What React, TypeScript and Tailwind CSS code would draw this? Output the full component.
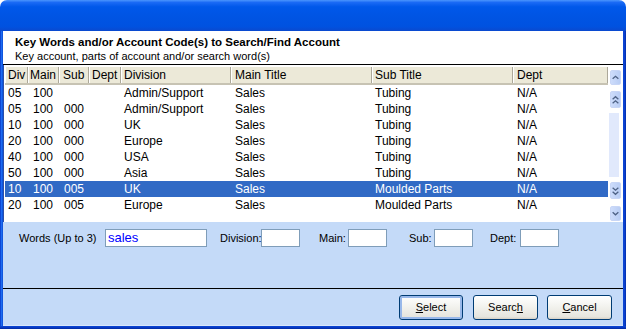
import React from "react";

const cols = [
  { w: 23, label: "Div", hp: 3, dp: 3 },
  { w: 31, label: "Main", hp: 2, dp: 5 },
  { w: 30, label: "Sub", hp: 4, dp: 5 },
  { w: 32, label: "Dept", hp: 3, dp: 3 },
  { w: 110, label: "Division", hp: 3, dp: 3 },
  { w: 141, label: "Main Title", hp: 4, dp: 4 },
  { w: 141, label: "Sub Title", hp: 3, dp: 3 },
  { w: 95, label: "Dept", hp: 4, dp: 4 },
];

const rows = [
  ["05", "100", "", "", "Admin/Support", "Sales", "Tubing", "N/A"],
  ["05", "100", "000", "", "Admin/Support", "Sales", "Tubing", "N/A"],
  ["10", "100", "000", "", "UK", "Sales", "Tubing", "N/A"],
  ["20", "100", "000", "", "Europe", "Sales", "Tubing", "N/A"],
  ["40", "100", "000", "", "USA", "Sales", "Tubing", "N/A"],
  ["50", "100", "000", "", "Asia", "Sales", "Tubing", "N/A"],
  ["10", "100", "005", "", "UK", "Sales", "Moulded Parts", "N/A"],
  ["20", "100", "005", "", "Europe", "Sales", "Moulded Parts", "N/A"],
];

function Chev({ dir, double }: { dir: "up" | "down"; double?: boolean }) {
  const up = dir === "up";
  const p = (y: number) =>
    up ? `M2 ${y + 3} L5.5 ${y} L9 ${y + 3}` : `M2 ${y} L5.5 ${y + 3} L9 ${y}`;
  return (
    <svg width="11" height={double ? 14 : 12} viewBox={`0 0 11 ${double ? 14 : 12}`}>
      {double ? (
        <>
          <path d={p(3)} stroke="#4d6185" strokeWidth="1.6" fill="none" />
          <path d={p(8)} stroke="#4d6185" strokeWidth="1.6" fill="none" />
        </>
      ) : (
        <path d={p(4)} stroke="#4d6185" strokeWidth="1.6" fill="none" />
      )}
    </svg>
  );
}

function SBtn({ h, children }: { h: string; children: React.ReactNode }) {
  return (
    <div
      className={`${h} w-[11px] flex items-center justify-center rounded-[2px] border border-[#c8d6f6] bg-[linear-gradient(90deg,#cddcfb,#b9cdf4)]`}
    >
      {children}
    </div>
  );
}

function XPButton({ children, def }: { children: React.ReactNode; def?: boolean }) {
  return (
    <div
      className={`h-[25px] flex items-center justify-center rounded-[3px] border border-[#003c74] bg-[linear-gradient(180deg,#ffffff_0%,#f4f4f0_40%,#e6e5de_90%,#d6d0c5_100%)] text-[11px] text-black ${
        def ? "shadow-[inset_0_0_0_2px_#98b8ea]" : ""
      }`}
    >
      {children}
    </div>
  );
}

export default function App() {
  return (
    <div
      className="w-[626px] h-[329px] flex flex-col overflow-hidden rounded-t-[7px]"
      style={{ fontFamily: '"Liberation Sans", Arial, sans-serif' }}
    >
      {/* title bar */}
      <div className="h-[31px] shrink-0 bg-[linear-gradient(180deg,#4a95fd_0%,#1a6af5_8%,#0058ea_22%,#0054e3_55%,#0052e0_85%,#0a49cf_100%)]" />
      <div className="flex flex-1 min-h-0">
        <div className="w-[3px] bg-[linear-gradient(90deg,#0733c6,#1d6cf0,#0a4ad6)]" />
        <div className="w-[620px] flex flex-col">
          {/* header */}
          <div className="h-[33px] bg-white pl-[12px] pt-[4px] shrink-0">
            <div className="text-[11.5px] font-bold leading-[14px] text-black">
              Key Words and/or Account Code(s) to Search/Find Account
            </div>
            <div className="text-[11px] leading-[14px] text-black">
              Key account, parts of account and/or search word(s)
            </div>
          </div>
          <div className="h-[1px] bg-black shrink-0" />
          {/* grid */}
          <div className="h-[157px] bg-white border-l border-[#2a4fa8] flex shrink-0">
            <div className="w-[604px] pl-[1px] pt-[2px]">
              <div className="flex h-[18px] bg-[#ece9d8] border-b-[2px] border-[#c7c3b3]">
                {cols.map((c, i) => (
                  <div
                    key={i}
                    className="h-full border-l border-r border-l-white border-r-[#aca899] text-[12px] leading-[16px] text-black whitespace-nowrap overflow-hidden"
                    style={{ width: c.w, paddingLeft: c.hp - 1 }}
                  >
                    {c.label}
                  </div>
                ))}
              </div>
              {rows.map((r, ri) => {
                const sel = ri === 6;
                return (
                  <div
                    key={ri}
                    className={`flex h-[16px] ${sel ? "bg-[#316ac5] text-white" : "text-black"}`}
                  >
                    {r.map((cell, ci) => (
                      <div
                        key={ci}
                        className="text-[12px] leading-[16px] whitespace-nowrap overflow-hidden"
                        style={{ width: cols[ci].w, paddingLeft: cols[ci].dp }}
                      >
                        {cell}
                      </div>
                    ))}
                  </div>
                );
              })}
            </div>
            <div className="ml-[2px] pt-[5px] flex flex-col">
              <SBtn h="h-[15px]">
                <Chev dir="up" />
              </SBtn>
              <div className="mt-[6px]">
                <SBtn h="h-[17px]">
                  <Chev dir="up" double />
                </SBtn>
              </div>
              <div className="mt-[5px] h-[64px] w-[10px] -ml-[1px] bg-[#e1e9fc]" />
              <div className="mt-[5px]">
                <SBtn h="h-[17px]">
                  <Chev dir="down" double />
                </SBtn>
              </div>
              <div className="mt-[7px]">
                <SBtn h="h-[15px]">
                  <Chev dir="down" />
                </SBtn>
              </div>
            </div>
          </div>
          {/* bottom panel */}
          <div className="flex-1 bg-[#c4daf8] flex flex-col text-[11px] text-black">
            <div className="mt-[7px] h-[18px] flex items-center pl-[16px]">
              <div className="w-[86px] whitespace-nowrap">Words (Up to 3)</div>
              <div className="w-[102px] h-[18px] bg-white border border-[#7f9db9] pl-[2px] text-[13px] leading-[15px] text-[#0000ff]">
                sales
              </div>
              <div className="ml-[13px] w-[41px]">Division:</div>
              <div className="w-[39px] h-[18px] bg-white border border-[#7f9db9]" />
              <div className="ml-[19px] w-[29px]">Main:</div>
              <div className="w-[39px] h-[18px] bg-white border border-[#7f9db9]" />
              <div className="ml-[22px] w-[25px]">Sub:</div>
              <div className="w-[39px] h-[18px] bg-white border border-[#7f9db9]" />
              <div className="ml-[17px] w-[30px]">Dept:</div>
              <div className="w-[39px] h-[18px] bg-white border border-[#7f9db9]" />
            </div>
            <div className="flex-1" />
            <div className="h-[1px] bg-black" />
            <div className="flex justify-end pr-[11px] pt-[6px] pb-[5px]">
              <div className="w-[64px]">
                <XPButton def>
                  <span>
                    <span className="underline">S</span>elect
                  </span>
                </XPButton>
              </div>
              <div className="w-[65px] ml-[10px]">
                <XPButton>
                  <span>
                    Searc<span className="underline">h</span>
                  </span>
                </XPButton>
              </div>
              <div className="w-[65px] ml-[9px]">
                <XPButton>
                  <span>
                    <span className="underline">C</span>ancel
                  </span>
                </XPButton>
              </div>
            </div>
            <div className="h-[1px] bg-[#d9e6fb]" />
          </div>
        </div>
        <div className="w-[3px] bg-[linear-gradient(90deg,#0a4ad6,#0c3fcf,#002ea8)]" />
      </div>
      <div className="h-[3px] shrink-0 bg-[linear-gradient(180deg,#0a4ad6,#0838c4,#002a9c)]" />
    </div>
  );
}
